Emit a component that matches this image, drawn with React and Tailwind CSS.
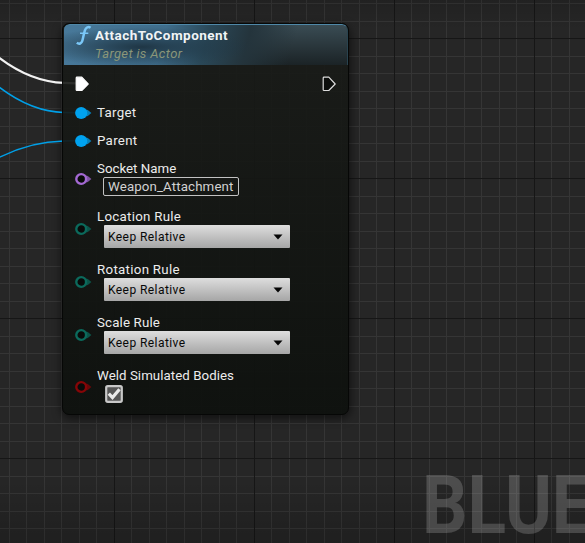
import React from "react";

function Wires() {
  return (
    <svg className="absolute inset-0" width="585" height="543" fill="none">
      <path d="M-1 57.500C20 73.500 40 82 64 82.800L76 83.300" stroke="#f2f2f2" strokeWidth="2.200" />
      <path d="M-1 87C20 103 40 112 64 112.400L76 112.700" stroke="#00a0e8" strokeWidth="1.500" />
      <path d="M-1 157.500C20 147 40 141.300 64 141L76 140.800" stroke="#00a0e8" strokeWidth="1.500" />
    </svg>
  );
}

function ExecPin({ filled }) {
  return (
    <svg width="15" height="16" viewBox="0 0 15 16" className="block shrink-0">
      <path
        d="M1.200 2Q1.200 1.200 2 1.200H6.800L13.200 8L6.800 14.500H2Q1.200 14.500 1.200 13.700Z"
        fill={filled ? "#fff" : "#0c0e0c"}
        stroke={filled ? "#fff" : "#dcdcdc"}
        strokeWidth="1.200"
        strokeLinejoin="round"
      />
    </svg>
  );
}

function Pin({ color, connected }) {
  return (
    <svg width="18" height="14" viewBox="0 0 18 14" className="block shrink-0">
      <path d="M12 3.600L13.800 3.900L17.400 7L13.800 10.100L12 10.400Z" fill={color} opacity="0.75" />
      <circle
        cx="7.200"
        cy="7"
        r={connected ? 6.1 : 4.9}
        fill={connected ? color : "#090b0a"}
        stroke={color}
        strokeWidth={connected ? 0 : 2.4}
      />
    </svg>
  );
}

function Row({ color, connected, height, pinTop, label, tracking, children }) {
  return (
    <div className={`flex items-start ${height}`}>
      <div className={`w-[23px] shrink-0 ${pinTop}`}>
        <Pin color={color} connected={connected} />
      </div>
      <div>
        <div className={`h-4 text-[13.300px] leading-4 whitespace-nowrap text-[#ececec] ${tracking}`}>{label}</div>
        {children}
      </div>
    </div>
  );
}

function Select({ value }) {
  return (
    <div className="ml-[7px] flex h-[23px] w-[186px] items-center justify-between rounded-[1px] bg-linear-to-b from-[#dedede] to-[#a6a6a6] pr-[7px] pl-1 text-[12px] tracking-[0.430px] text-[#080808]">
      <span>{value}</span>
      <svg width="10" height="6" viewBox="0 0 10 6">
        <path d="M0.500 0.500H9.500L5 5.500Z" fill="#050505" />
      </svg>
    </div>
  );
}

function Node() {
  return (
    <div className="absolute top-[23px] left-[62px] h-[392px] w-[287px] overflow-hidden rounded-[7px] border border-[#060706] bg-linear-to-b from-[#191b18]/90 to-[#0e110e]/95 pl-px">
      <header className="flex h-[41px] rounded-t-[6px] border-t border-r border-t-[#4f88a8] border-r-[#29434f] bg-[radial-gradient(ellipse_110px_20px_at_78px_22px,#1f3645_0%,transparent_100%),linear-gradient(105deg,#48799a_0%,#3f6d8b_35%,#2a4858_50%,#24343c_64%,transparent_80%),linear-gradient(to_bottom,#3a4c54,#1b2326)] pl-[12px]">
        <svg width="17" height="22" viewBox="0 0 17 22" className="shrink-0">
          <path
            d="M0.800 17.800C3.300 19.600 5.400 18.500 6.300 15.800C7.300 12.700 7.800 8.600 8.900 5.300C9.900 2.300 12.300 1.200 14.600 2.800"
            fill="none"
            stroke="#7ac7f7"
            strokeWidth="2.500"
          />
          <path d="M4 8.200H12.300" stroke="#7ac7f7" strokeWidth="1.600" />
        </svg>
        <div className="ml-[2px] whitespace-nowrap">
          <h1 className="mt-px h-[18px] text-[13.500px] leading-[18px] font-bold tracking-[0.470px] text-[#f0f4f6]">AttachToComponent</h1>
          <p className="mt-px h-[18px] text-[13px] leading-[18px] tracking-[0.360px] text-[#8a9679] italic">Target is Actor</p>
        </div>
      </header>
      <div className="pt-[11px] pr-[11px] pl-[11px]">
        <div className="flex h-[29px] items-start justify-between">
          <ExecPin filled />
          <ExecPin />
        </div>
        <div className="-ml-px">
          <Row color="#00a2ef" connected pinTop="pt-px" height="h-[28px]" label="Target" tracking="tracking-[0.300px]" />
          <Row color="#00a2ef" connected pinTop="pt-px" height="h-[28px]" label="Parent" tracking="tracking-[0.300px]" />
          <Row color="#a469d3" pinTop="pt-[11px]" height="h-[48px]" label="Socket Name" tracking="tracking-[0px]">
            <div className="ml-[6px] flex h-[19px] w-[136px] items-center rounded-[2px] border border-[#c2c2c2] pl-1 text-[13.300px] tracking-[0.120px] text-[#d2d2d2]">
              Weapon_Attachment
            </div>
          </Row>
          <Row color="#0b6a5c" pinTop="pt-[13px]" height="h-[53px]" label="Location Rule" tracking="tracking-[0.270px]">
            <Select value="Keep Relative" />
          </Row>
          <Row color="#0b6a5c" pinTop="pt-[13px]" height="h-[53px]" label="Rotation Rule" tracking="tracking-[0.300px]">
            <Select value="Keep Relative" />
          </Row>
          <Row color="#0b6a5c" pinTop="pt-[13px]" height="h-[53px]" label="Scale Rule" tracking="tracking-[0.150px]">
            <Select value="Keep Relative" />
          </Row>
          <Row color="#860507" pinTop="pt-[12px]" height="h-[40px]" label="Weld Simulated Bodies" tracking="tracking-[0.050px]">
            <svg width="18" height="18" viewBox="0 0 18 18" className="mt-px ml-2 block">
              <rect x="1.200" y="1.200" width="15.600" height="15.600" rx="1.500" fill="#555" stroke="#c8c8c8" strokeWidth="2.200" />
              <path d="M3.800 8.600L7.500 12.600L14.500 4.300" fill="none" stroke="#e8e8e8" strokeWidth="3.200" />
            </svg>
          </Row>
        </div>
      </div>
    </div>
  );
}

export default function App() {
  return (
    <div className="relative h-[543px] w-[585px] overflow-hidden bg-[#262626] font-[Roboto,'Liberation_Sans',sans-serif]">
      <div className="absolute inset-0 bg-[linear-gradient(#353535_1px,transparent_1px),linear-gradient(#353535_1px,transparent_1px),linear-gradient(90deg,#353535_1px,transparent_1px),linear-gradient(90deg,#353535_1px,transparent_1px)] bg-size-[35px_35px] bg-position-[0_3px,0_21px,9px_0,26px_0]" />
      <div className="absolute inset-0 bg-[linear-gradient(#161616_1px,transparent_1px),linear-gradient(90deg,#161616_1px,transparent_1px)] bg-size-[140px_140px] bg-position-[0_38px,114px_0]" />
      <div className="absolute inset-0 bg-[linear-gradient(to_bottom,rgba(0,0,0,0.12),transparent_30px,transparent_480px,rgba(0,0,0,0.18))]" />
      <div className="absolute top-[458px] left-[422px] origin-left scale-x-[0.880] text-[81px] leading-[96px] font-bold whitespace-nowrap text-white/18">BLUE</div>
      <div className="absolute top-[26px] left-[64px] h-[388px] w-[284px] rounded-[7px] shadow-[0_2px_8px_3px_rgba(0,0,0,0.5)]" />
      <Wires />
      <Node />
    </div>
  );
}
